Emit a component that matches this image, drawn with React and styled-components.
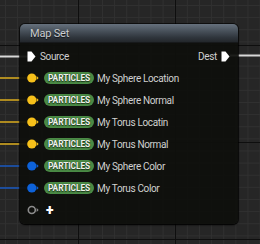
import React from 'react';
import styled, { createGlobalStyle } from 'styled-components';

const Global = createGlobalStyle`
  html, body { margin: 0; padding: 0; }
  body { width: 260px; height: 244px; overflow: hidden; background: #262626; }
`

const Canvas = styled.div`
  position: relative;
  width: 260px;
  height: 244px;
  overflow: hidden;
  background-color: #262626;
  background-image:
    linear-gradient(to right, #0e0e0e 1px, transparent 1px),
    linear-gradient(to bottom, #0e0e0e 1px, transparent 1px),
    linear-gradient(to right, #303030 1px, transparent 1px),
    linear-gradient(to bottom, #303030 1px, transparent 1px);
  background-size: 97px 97px, 97px 97px, 12.125px 12.125px, 12.125px 12.125px;
  background-position: 78px 45px, 78px 45px, 5px 5px, 5px 5px;
  font-family: Roboto, "Liberation Sans", sans-serif;
`

const Wires = styled.svg`
  position: absolute;
  left: 0;
  top: 0;
`

const Node = styled.div`
  position: absolute;
  left: 20px;
  top: 24px;
  width: 218px;
  height: 200px;
  border-radius: 5px;
  background: rgba(14, 15, 12, 0.93);
  box-shadow: 0 1px 2px rgba(0, 0, 0, 0.9), 0 0 0 1px rgba(0, 0, 0, 0.6);
  display: flex;
  flex-direction: column;
  overflow: hidden;
`

const Header = styled.div`
  height: 18px;
  display: flex;
  align-items: center;
  padding-left: 10px;
  background: linear-gradient(to bottom, #66717d 0%, #4b545e 35%, #2f353c 75%, #23272b 100%);
  border-bottom: 1px solid #17191b;
  color: #c9ccd0;
  font-size: 11px;
  letter-spacing: -0.2px;
  text-shadow: 0 1px 1px rgba(0, 0, 0, 0.7);
`

const Body = styled.div`
  display: flex;
  flex-direction: column;
  padding-top: 2px;
`

const Row = styled.div`
  height: 22px;
  display: flex;
  align-items: center;
  justify-content: ${p => (p.split ? 'space-between' : 'flex-start')};
  padding: 0 8px 0 7px;
`

const Side = styled.div`
  display: flex;
  align-items: center;
  gap: 4px;
`

const Label = styled.span`
  color: #d0d0d0;
  font-size: 10px;
  letter-spacing: -0.35px;
  white-space: nowrap;
`

const Pill = styled.span`
  display: inline-flex;
  align-items: center;
  height: 12px;
  padding: 0 4px;
  margin-left: 4px;
  margin-right: 3px;
  border-radius: 6px;
  background: #4a8a45;
  color: #eef2ec;
  font-size: 8.4px;
  font-weight: 700;
  letter-spacing: -0.1px;
  text-shadow: 0 0 1px #1a3318, 0 1px 1px #1a3318;
`

const Plus = styled.span`
  color: #ffffff;
  font-size: 14px;
  font-weight: 900;
  margin-left: 6px;
  line-height: 1;
  margin-top: -1px;
`

const ExecPin = () => (
  <svg width="9" height="11" viewBox="0 0 9 11">
    <path d="M0.5 0.5 H4.5 L8.5 5.5 L4.5 10.5 H0.5 Z" fill="#ffffff" />
  </svg>
)

const DataPin = ({ color, hollow }) => (
  <svg width="13" height="10" viewBox="0 0 13 10">
    {hollow ? (
      <circle cx="4.8" cy="5" r="3.5" fill="none" stroke="#8c8c8c" strokeWidth="1.6" />
    ) : (
      <circle cx="4.8" cy="5" r="4.6" fill={color} />
    )}
    <path d="M9.6 3 L11.6 5 L9.6 7 Z" fill={hollow ? '#8c8c8c' : color} />
  </svg>
)

const params = [
  { name: 'My Sphere Location', color: '#f7c11a', wire: '#d0a41f' },
  { name: 'My Sphere Normal', color: '#f7c11a', wire: '#d0a41f' },
  { name: 'My Torus Locatin', color: '#f7c11a', wire: '#d0a41f' },
  { name: 'My Torus Normal', color: '#f7c11a', wire: '#d0a41f' },
  { name: 'My Sphere Color', color: '#0d62da', wire: '#1b57b8' },
  { name: 'My Torus Color', color: '#0d62da', wire: '#1b57b8' },
]

function App() {
  return (
    <Canvas>
      <Global />
      <Wires width="260" height="244">
        <line x1="0" y1="56.5" x2="28" y2="56.5" stroke="#d8d8d8" strokeWidth="2" />
        <line x1="230" y1="55.5" x2="260" y2="55.5" stroke="#d8d8d8" strokeWidth="2" />
        {params.map((p, i) => (
          <line key={i} x1="0" y1={78 + i * 22} x2="30" y2={78 + i * 22} stroke={p.wire} strokeWidth="1.6" />
        ))}
      </Wires>
      <Node>
        <Header>Map Set</Header>
        <Body>
          <Row split>
            <Side>
              <ExecPin />
              <Label>Source</Label>
            </Side>
            <Side>
              <Label>Dest</Label>
              <ExecPin />
            </Side>
          </Row>
          {params.map(p => (
            <Row key={p.name}>
              <DataPin color={p.color} />
              <Pill>PARTICLES</Pill>
              <Label>{p.name}</Label>
            </Row>
          ))}
          <Row>
            <DataPin hollow />
            <Plus>+</Plus>
          </Row>
        </Body>
      </Node>
    </Canvas>
  );
}

export default App;
